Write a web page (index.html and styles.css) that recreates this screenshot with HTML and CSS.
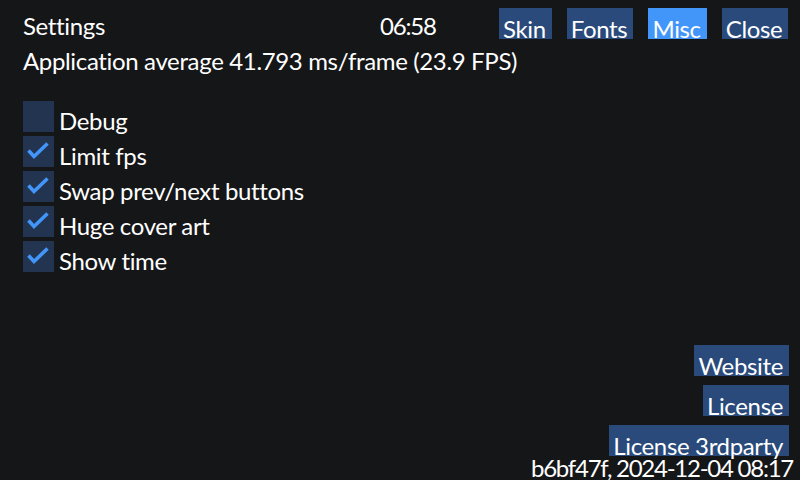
FILE: index.html
```html
<!DOCTYPE html>
<html lang="en">
<head>
<meta charset="utf-8">
<title>Settings</title>
<link rel="stylesheet" href="styles.css">
</head>
<body>
<div class="app">
  <header class="topbar">
    <span class="title">Settings</span>
    <span class="clock">06:58</span>
    <nav class="tabs">
      <button class="btn">Skin</button>
      <button class="btn">Fonts</button>
      <button class="btn active">Misc</button>
      <button class="btn">Close</button>
    </nav>
  </header>
  <p class="stats">Application average 41.793 ms/frame (23.9 FPS)</p>
  <ul class="options">
    <li class="option"><span class="box"></span><span class="label">Debug</span></li>
    <li class="option"><span class="box"><svg viewBox="0 0 31 31" class="check"><polyline points="5.5,14.5 11,20.5 24.5,7.5"/></svg></span><span class="label">Limit fps</span></li>
    <li class="option"><span class="box"><svg viewBox="0 0 31 31" class="check"><polyline points="5.5,14.5 11,20.5 24.5,7.5"/></svg></span><span class="label">Swap prev/next buttons</span></li>
    <li class="option"><span class="box"><svg viewBox="0 0 31 31" class="check"><polyline points="5.5,14.5 11,20.5 24.5,7.5"/></svg></span><span class="label">Huge cover art</span></li>
    <li class="option"><span class="box"><svg viewBox="0 0 31 31" class="check"><polyline points="5.5,14.5 11,20.5 24.5,7.5"/></svg></span><span class="label">Show time</span></li>
  </ul>
  <div class="links">
    <button class="btn">Website</button>
    <button class="btn">License</button>
    <button class="btn">License 3rdparty</button>
  </div>
  <footer class="build">b6bf47f, 2024-12-04 08:17</footer>
</div>
</body>
</html>
```
FILE: styles.css
```css
html, body {
  margin: 0;
  padding: 0;
  background: #151618;
}
body {
  font-family: "Lato", "Liberation Sans", sans-serif;
  font-size: 24px;
  letter-spacing: -0.35px;
  color: #ffffff;
}
.app {
  width: 800px;
  height: 480px;
  box-sizing: border-box;
  display: flex;
  flex-direction: column;
  overflow: hidden;
}
.topbar {
  display: flex;
  align-items: flex-start;
  padding-top: 8px;
  height: 31px;
}
.title {
  width: 357px;
  padding-left: 23px;
  padding-top: 6px;
  line-height: 24px;
}
.clock {
  width: 119px;
  padding-top: 6px;
  line-height: 24px;
  letter-spacing: -1.2px;
}
.tabs {
  display: flex;
  gap: 15px;
}
.btn {
  font: inherit;
  letter-spacing: -0.35px;
  color: #ffffff;
  background: #294a7a;
  border: none;
  margin: 0;
  height: 31px;
  box-sizing: border-box;
  padding: 9px 6px 0 4px;
  line-height: 24px;
  cursor: pointer;
}
.btn.active {
  background: #4296fa;
}
.stats {
  margin: 0;
  padding: 10px 0 0 23px;
  line-height: 24px;
  height: 26px;
}
.options {
  list-style: none;
  margin: 0;
  padding: 26px 0 0 23px;
  display: flex;
  flex-direction: column;
  gap: 4px;
}
.option {
  display: flex;
  align-items: flex-start;
  height: 31px;
}
.box {
  width: 31px;
  height: 31px;
  background: #22344f;
  flex: none;
}
.check {
  display: block;
  width: 31px;
  height: 31px;
  fill: none;
  stroke: #4296fa;
  stroke-width: 3.6;
}
.label {
  padding-left: 5px;
  padding-top: 8px;
  line-height: 24px;
}
.links {
  margin-top: auto;
  display: flex;
  flex-direction: column;
  align-items: flex-end;
  gap: 9px;
  padding-right: 11px;
}
.build {
  text-align: right;
  padding-right: 7px;
  line-height: 24px;
  height: 24px;
  letter-spacing: -1.25px;
}
```
